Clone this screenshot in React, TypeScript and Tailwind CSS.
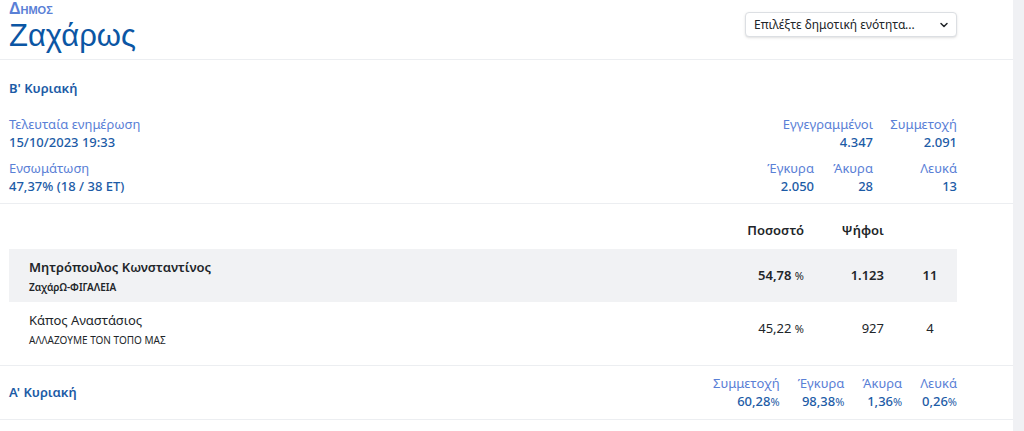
import { ChevronDown } from 'lucide-react';

const label = 'text-[13px] leading-[18px] text-[#5a80d6]';
const value = 'text-[13px] leading-[18px] font-medium text-[#1c5ba6]';

const candidates = [
  {
    name: 'Μητρόπουλος Κωνσταντίνος',
    party: 'ΖαχάρΩ-ΦΙΓΑΛΕΙΑ',
    pct: '54,78',
    votes: '1.123',
    seats: '11',
    winner: true,
  },
  {
    name: 'Κάπος Αναστάσιος',
    party: 'ΑΛΛΑΖΟΥΜΕ ΤΟΝ ΤΟΠΟ ΜΑΣ',
    pct: '45,22',
    votes: '927',
    seats: '4',
    winner: false,
  },
];

const firstRound = [
  { label: 'Συμμετοχή', value: '60,28' },
  { label: 'Έγκυρα', value: '98,38' },
  { label: 'Άκυρα', value: '1,36' },
  { label: 'Λευκά', value: '0,26' },
];

const Stat = ({ title, amount }: { title: string; amount: string }) => (
  <div className="text-right">
    <div className={label}>{title}</div>
    <div className={value}>{amount}</div>
  </div>
);

const App = () => {
  return (
    <div
      className="flex min-h-[431px] w-full bg-white text-[#212529]"
      style={{ fontFamily: '"Noto Sans", "Open Sans", sans-serif' }}
    >
      <main className="flex-1">
        {/* header */}
        <header className="flex h-[60px] items-start justify-between border-b border-[#eceef1] pl-[9px] pr-[56px]">
          <div
            className="pt-[2px]"
            style={{ fontFamily: '"Liberation Sans", Arial, sans-serif' }}
          >
            <div className="text-[16px] leading-[14px] font-bold text-[#5a80d6] [font-variant-caps:small-caps]">
              Δημος
            </div>
            <h1 className="mt-[3px] text-[31px] leading-[34px] text-[#0b56a4]">
              Ζαχάρως
            </h1>
          </div>
          <button className="mt-[12px] flex h-[25px] w-[212px] items-center justify-between rounded border border-[#dcdfe3] bg-white pl-[8px] pr-[6px] text-[12px] text-[#212529] shadow-sm">
            <span>Επιλέξτε δημοτική ενότητα...</span>
            <ChevronDown size={12} strokeWidth={3} />
          </button>
        </header>

        {/* second round summary */}
        <section className="border-b border-[#eceef1] pb-[8px] pl-[9px] pr-[56px] pt-[19px]">
          <h2 className="text-[13px] leading-[18px] font-semibold text-[#1c5ba6]">
            Β' Κυριακή
          </h2>
          <div className="mt-[18px] flex items-start justify-between">
            <div className="flex flex-col gap-[8px]">
              <div>
                <div className={label}>Τελευταία ενημέρωση</div>
                <div className={value}>15/10/2023 19:33</div>
              </div>
              <div>
                <div className={label}>Ενσωμάτωση</div>
                <div className={value}>47,37% (18 / 38 ΕΤ)</div>
              </div>
            </div>
            <div className="grid grid-cols-[60px_59px_84px] gap-y-[8px]">
              <div className="col-span-2">
                <Stat title="Εγγεγραμμένοι" amount="4.347" />
              </div>
              <Stat title="Συμμετοχή" amount="2.091" />
              <Stat title="Έγκυρα" amount="2.050" />
              <Stat title="Άκυρα" amount="28" />
              <Stat title="Λευκά" amount="13" />
            </div>
          </div>
        </section>

        {/* candidates */}
        <section className="border-b border-[#eceef1] pb-[10px] pl-[9px] pr-[56px] pt-[17px]">
          <div className="flex h-[28px] items-start text-[13px] font-semibold">
            <div className="flex-1" />
            <div className="w-[100px] text-right">Ποσοστό</div>
            <div className="w-[80px] text-right">Ψήφοι</div>
            <div className="ml-[26px] w-[40px]" />
            <div className="w-[7px]" />
          </div>
          {candidates.map((c) => (
            <div
              key={c.name}
              className={`flex h-[53px] items-center ${c.winner ? 'bg-[#f1f2f4] font-semibold' : ''}`}
            >
              <div className="flex-1 pl-[20px]">
                <div className="text-[13px] leading-[19px]">{c.name}</div>
                <div className="mt-[3px] text-[10px] leading-[14px]">{c.party}</div>
              </div>
              <div className="w-[100px] text-right text-[13px]">
                {c.pct} <span className="text-[11px] font-normal">%</span>
              </div>
              <div className="w-[80px] text-right text-[13px]">{c.votes}</div>
              <div className="ml-[26px] w-[40px] text-center text-[13px]">{c.seats}</div>
              <div className="w-[7px]" />
            </div>
          ))}
        </section>

        {/* first round */}
        <section className="flex h-[54px] items-center justify-between border-b border-[#eceef1] pl-[9px] pr-[56px]">
          <h2 className="text-[13px] font-semibold text-[#1c5ba6]">Α' Κυριακή</h2>
          <div className="flex gap-[18px]">
            {firstRound.map((s) => (
              <div key={s.label} className="text-right">
                <div className={label}>{s.label}</div>
                <div className={value}>
                  {s.value}
                  <span className="text-[11px] font-normal">%</span>
                </div>
              </div>
            ))}
          </div>
        </section>
      </main>
      <aside className="w-[11px] shrink-0 bg-[#f0f1f4]" />
    </div>
  );
};

export default App;
